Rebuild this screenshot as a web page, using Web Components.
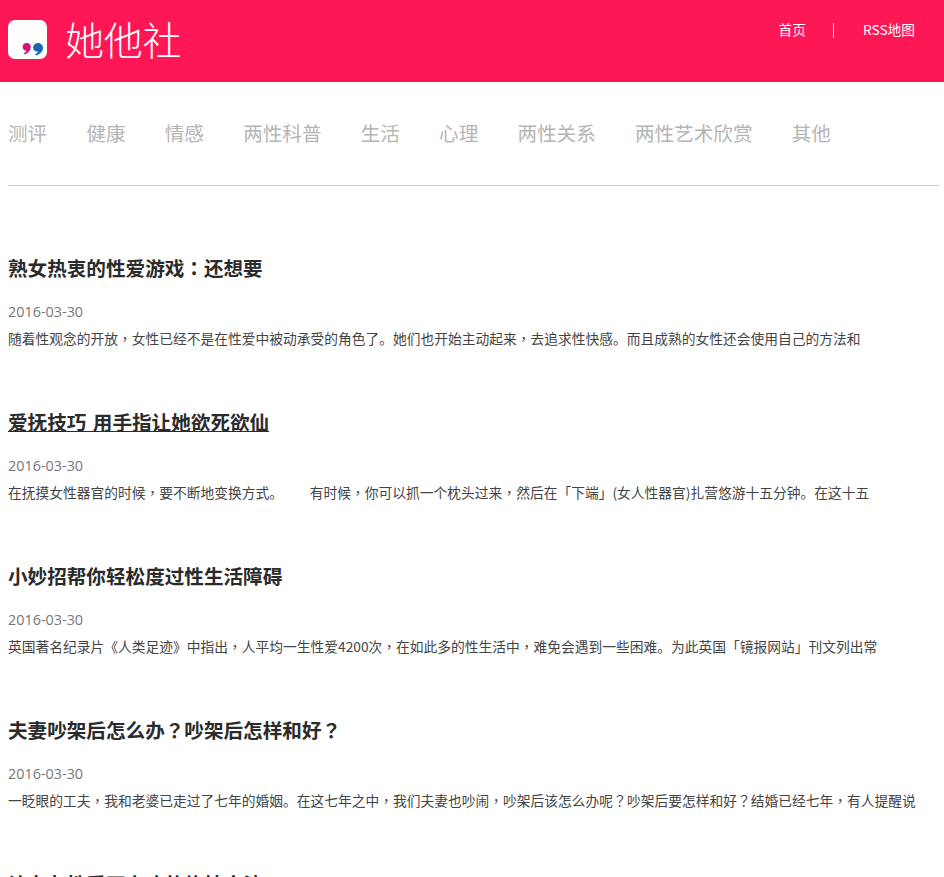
<!DOCTYPE html>
<html lang="zh"><head><meta charset="utf-8">
<style>
html,body{margin:0;padding:0;background:#fff}
html{overflow:hidden}
body{height:877px;overflow:hidden;font-family:"Noto Sans CJK SC","Open Sans",sans-serif;color:#333}
</style></head><body>
<site-header></site-header>
<site-nav></site-nav>
<main-list>
<post-item title="熟女热衷的性爱游戏：还想要" date="2016-03-30">随着性观念的开放，女性已经不是在性爱中被动承受的角色了。她们也开始主动起来，去追求性快感。而且成熟的女性还会使用自己的方法和</post-item>
<post-item title="爱抚技巧 用手指让她欲死欲仙" date="2016-03-30" underline>在抚摸女性器官的时候，要不断地变换方式。　　&nbsp;&nbsp;有时候，你可以抓一个枕头过来，然后在「下端」(女人性器官)扎营悠游十五分钟。在这十五</post-item>
<post-item title="小妙招帮你轻松度过性生活障碍" date="2016-03-30">英国著名纪录片《人类足迹》中指出，人平均一生性爱4200次，在如此多的性生活中，难免会遇到一些困难。为此英国「镜报网站」刊文列出常</post-item>
<post-item title="夫妻吵架后怎么办？吵架后怎样和好？" date="2016-03-30">一眨眼的工夫，我和老婆已走过了七年的婚姻。在这七年之中，我们夫妻也吵闹，吵架后该怎么办呢？吵架后要怎样和好？结婚已经七年，有人提醒说</post-item>
<post-item title="让女友性爱不上瘾的绝技方法" date="2016-03-30"></post-item>
</main-list>
<script>
function def(name,html){
  customElements.define(name,class extends HTMLElement{
    constructor(){super();this.attachShadow({mode:'open'}).innerHTML=html;}
  });
}
def('site-header',`<style>
:host{display:flex;justify-content:space-between;height:82px;background:#ff1655;color:#fff;box-sizing:border-box;padding:0 29px 0 8px}
.brand{display:flex;align-items:center;gap:18px;height:78px;margin-top:0}
svg{display:block}
.name{font:300 39px/1 "Noto Sans CJK SC",sans-serif;letter-spacing:-.3px;margin-top:-1px}
nav{display:flex;align-items:center;height:60px;font:13.72px/1 "Noto Sans CJK SC",sans-serif}
.sep{width:1.500px;height:15px;background:#ffe3ea;margin:0 28.500px 0 27px}
</style>
<div class="brand"><svg width="39" height="39" viewBox="0 0 39 39"><rect width="39" height="39" rx="7" fill="#fff"/><path d="M14.700 27a4 4 0 1 1 8 0c0 3.500-2.500 6-6 7.500l-.8-1.200c1.500-.9 2.300-1.800 2.500-2.500a4 4 0 0 1-3.700-3.800z" fill="#d6127f"/><path d="M25 28a5 5 0 1 1 10 0c0 3.500-3 6-7 7.500l-.8-1.200c1.800-.9 2.700-2 3-2.700A5 5 0 0 1 25 28z" fill="#1668b4"/></svg><span class="name">她他社</span></div>
<nav><a>首页</a><span class="sep"></span><a>RSS地图</a></nav>`);
def('site-nav',`<style>
:host{display:flex;gap:39.2px;margin:0 5px 0 8px;height:104px;box-sizing:border-box;padding-top:36px;border-bottom:1px solid #ccc;color:#b5b5b5;font:19.6px/30px "Noto Sans CJK SC",sans-serif}
</style><span>测评</span><span>健康</span><span>情感</span><span>两性科普</span><span>生活</span><span>心理</span><span>两性关系</span><span>两性艺术欣赏</span><span>其他</span>`);
def('main-list',`<style>:host{display:block;padding:52px 0 0 8px}</style><slot></slot>`);
const punct=s=>s.replace(/([，：？])/g,'<span class="p" lang="zh-TW">$1</span>');
customElements.define('post-item',class extends HTMLElement{
  constructor(){super();this.attachShadow({mode:'open'});}
  connectedCallback(){
    const u=this.hasAttribute('underline');
    this.innerHTML=punct(this.innerHTML);
    this.shadowRoot.innerHTML=`<style>
:host{display:block;height:154px;box-sizing:border-box;padding-top:15px}
h2{margin:0;font:700 19.6px/30px "Noto Sans CJK SC",sans-serif;color:#2b2b2b;word-spacing:2px;${u?'text-decoration:underline;':''}}
.p{font-family:"Noto Sans CJK TC",sans-serif}
::slotted(.p){font-family:"Noto Sans CJK TC",sans-serif}
.d{margin-top:19px;font:14.4px/20px "Open Sans",sans-serif;color:#777}
p{margin:6px 0 0;font:13.75px/20px "Noto Sans CJK SC",sans-serif;color:#444;white-space:nowrap}
</style><h2>${punct(this.getAttribute('title'))}</h2><div class="d">${this.getAttribute('date')}</div><p><slot></slot></p>`;
  }
});
</script>
</body></html>
